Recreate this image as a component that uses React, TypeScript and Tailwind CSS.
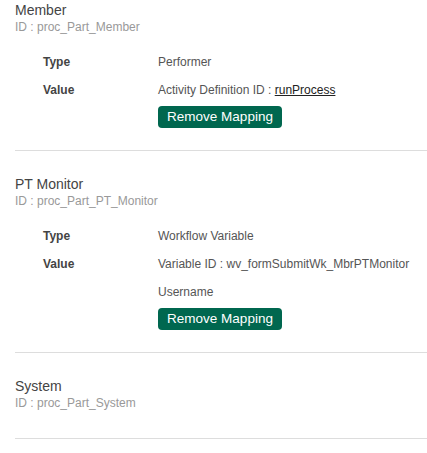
import React from "react";

interface Row {
  label?: string;
  value: React.ReactNode;
}

interface Participant {
  name: string;
  id: string;
  rows: Row[];
  mapped: boolean;
}

const participants: Participant[] = [
  {
    name: "Member",
    id: "proc_Part_Member",
    mapped: true,
    rows: [
      { label: "Type", value: "Performer" },
      {
        label: "Value",
        value: (
          <>
            Activity Definition ID :{" "}
            <a href="#" className="text-[#222] underline">
              runProcess
            </a>
          </>
        ),
      },
    ],
  },
  {
    name: "PT Monitor",
    id: "proc_Part_PT_Monitor",
    mapped: true,
    rows: [
      { label: "Type", value: "Workflow Variable" },
      { label: "Value", value: "Variable ID : wv_formSubmitWk_MbrPTMonitor" },
      { value: "Username" },
    ],
  },
  {
    name: "System",
    id: "proc_Part_System",
    mapped: false,
    rows: [],
  },
];

export default function App() {
  return (
    <div className="w-[427px] bg-white font-['Liberation_Sans',Arial,sans-serif]">
      {participants.map((p, index) => (
        <div
          key={p.id}
          className={`${index > 0 ? "mt-[23px]" : ""} ${p.mapped ? "pb-[22px]" : "pb-[28px]"} ml-[15px] border-b border-[#dddddd]`}
        >
          <div className="text-[14px] leading-[20px] text-[#444]">{p.name}</div>
          <div className="text-[12px] leading-[14px] text-[#999]">ID : {p.id}</div>
          {p.mapped && (
            <div className="mt-[14px] pl-[28px] text-[12px]">
              {p.rows.map((row, i) => (
                <div key={i} className="flex h-[28px] leading-[28px]">
                  <span className="w-[115px] shrink-0 font-bold text-[#444]">{row.label}</span>
                  <span className="text-[#555] whitespace-nowrap">{row.value}</span>
                </div>
              ))}
              <div className="pl-[115px] mt-[2px]">
                <button className="w-[124px] h-[22px] rounded-[4px] bg-[#00674f] text-white text-[13.5px] leading-[22px] text-center">
                  Remove Mapping
                </button>
              </div>
            </div>
          )}
        </div>
      ))}
    </div>
  );
}
